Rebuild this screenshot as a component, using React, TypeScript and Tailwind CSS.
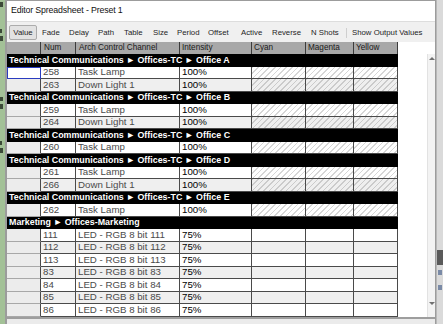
import React from "react";

type Row = { num: string; name: string; value: string };
type Group = { title: string; hatched: boolean; rows: Row[] };

const TC = "Technical Communications \u25BA Offices-TC \u25BA ";

const GROUPS: Group[] = [
  {
    title: TC + "Office A",
    hatched: true,
    rows: [
      { num: "258", name: "Task Lamp", value: "100%" },
      { num: "263", name: "Down Light 1", value: "100%" },
    ],
  },
  {
    title: TC + "Office B",
    hatched: true,
    rows: [
      { num: "259", name: "Task Lamp", value: "100%" },
      { num: "264", name: "Down Light 1", value: "100%" },
    ],
  },
  {
    title: TC + "Office C",
    hatched: true,
    rows: [{ num: "260", name: "Task Lamp", value: "100%" }],
  },
  {
    title: TC + "Office D",
    hatched: true,
    rows: [
      { num: "261", name: "Task Lamp", value: "100%" },
      { num: "266", name: "Down Light 1", value: "100%" },
    ],
  },
  {
    title: TC + "Office E",
    hatched: true,
    rows: [{ num: "262", name: "Task Lamp", value: "100%" }],
  },
  {
    title: "Marketing \u25BA Offices-Marketing",
    hatched: false,
    rows: ["111", "112", "113", "83", "84", "85", "86"].map((n) => ({
      num: n,
      name: "LED - RGB 8 bit " + n,
      value: "75%",
    })),
  },
];

const TABS = [
  { label: "Fade", w: "w-[27px]" },
  { label: "Delay", w: "w-[29px]" },
  { label: "Path", w: "w-[26px]" },
  { label: "Table", w: "w-[29px]" },
  { label: "Size", w: "w-[24px]" },
  { label: "Period", w: "w-[31px]" },
  { label: "Offset", w: "w-[33px]" },
  { label: "Active", w: "w-[31px]" },
  { label: "Reverse", w: "w-[39px]" },
  { label: "N Shots", w: "w-[35px]" },
];

const HATCH_WHITE =
  "bg-[repeating-linear-gradient(135deg,#d6d6d6_0px,#d6d6d6_1px,#ffffff_1px,#ffffff_4px)]";
const HATCH_GRAY =
  "bg-[repeating-linear-gradient(135deg,#cbcbcb_0px,#cbcbcb_1px,#efefef_1px,#efefef_4px)]";

function DataRow({
  row,
  shade,
  hatched,
  selected,
}: {
  row: Row;
  shade: boolean;
  hatched: boolean;
  selected: boolean;
}) {
  const bg = shade ? "bg-[#efefef]" : "bg-white";
  const colour = hatched ? (shade ? HATCH_GRAY : HATCH_WHITE) : bg;
  const cell = "h-full border-r border-b border-[#4a4a4a]";
  return (
    <div className="flex h-[12.5px] text-[9.7px] leading-none">
      <div
        className={`h-full w-[34px] ${
          selected
            ? "border border-[#2a3cc0] bg-white"
            : "border-r border-b border-r-[#4a4a4a] border-b-[#a8a8a8] bg-[#ececec]"
        }`}
      />
      <div className={`${cell} ${bg} flex w-[35px] items-center pl-[2px] text-[#4a4a4a]`}>
        {row.num}
      </div>
      <div className={`${cell} ${bg} flex w-[104px] items-center pl-[2px] text-[#4a4a4a]`}>
        {row.name}
      </div>
      <div className={`${cell} ${bg} flex w-[72px] items-center pl-[2px] text-black`}>
        {row.value}
      </div>
      <div className={`${cell} ${colour} w-[54px]`} />
      <div className={`${cell} ${colour} w-[48px]`} />
      <div className={`${cell} ${colour} w-[44px]`} />
    </div>
  );
}

export default function App() {
  return (
    <div className="flex h-[324px] w-[443px] overflow-hidden bg-[#d8d8d8] font-['Liberation_Sans',Arial,sans-serif]">
      {/* desktop behind, left */}
      <div className="flex w-[5px] flex-col bg-[#a3c197]">
        <div className="mt-[2px] h-[5px] w-[3px] bg-[#3c4a38]" />
        <div className="mt-[22px] h-[4px] w-[2px] bg-[#3c4a38]" />
        <div className="mt-[3px] h-[5px] w-[3px] bg-[#3c4a38]" />
        <div className="mt-[56px] h-[4px] w-[3px] bg-[#3c4a38]" />
        <div className="mt-[3px] h-[5px] w-[3px] bg-[#3c4a38]" />
        <div className="mt-[32px] h-[4px] w-[2px] bg-[#3c4a38]" />
        <div className="mt-[3px] h-[5px] w-[3px] bg-[#3c4a38]" />
      </div>

      {/* window */}
      <div className="flex w-[431px] flex-col border-l-2 border-r border-t border-[#9c9c9c] bg-white">
        <div className="flex h-[20px] shrink-0 items-center pl-[4px] text-[8.8px] tracking-[-0.15px] text-[#111]">
          Editor Spreadsheet - Preset 1
        </div>

        <div className="flex h-[21px] shrink-0 items-start border-t border-[#dddddd] bg-[#f0f0f0] pl-[2px] pt-[3px] text-[7.8px] text-[#1e1e1e]">
          <div className="flex h-[15px] w-[28px] items-center justify-center rounded-[2px] border border-[#acacac] bg-[#e2e2e2]">
            Value
          </div>
          <div className="ml-[5px] flex h-[15px] items-center">
            {TABS.map((t) => (
              <span key={t.label} className={`${t.w} whitespace-nowrap`}>
                {t.label}
              </span>
            ))}
            <span className="h-[10px] w-px bg-[#cfcfcf]" />
            <span className="ml-[5px] whitespace-nowrap">Show Output Values</span>
          </div>
        </div>

        <div className="flex min-h-0 flex-1">
          <div className="flex w-[391px] flex-col">
            <div className="flex h-[12px] bg-[#a8a8a8] text-[8.2px] leading-none text-[#1a1a1a]">
              <div className="h-full w-[34px] border-r border-[#3c3c3c]" />
              <div className="flex h-full w-[35px] items-center border-r border-[#3c3c3c] pl-[3px]">Num</div>
              <div className="flex h-full w-[104px] items-center border-r border-[#3c3c3c] pl-[3px]">
                Arch Control Channel
              </div>
              <div className="flex h-full w-[72px] items-center border-r border-[#3c3c3c] pl-[2px]">Intensity</div>
              <div className="flex h-full w-[54px] items-center border-r border-[#3c3c3c] pl-[2px]">Cyan</div>
              <div className="flex h-full w-[48px] items-center border-r border-[#3c3c3c] pl-[2px]">Magenta</div>
              <div className="flex h-full w-[44px] items-center border-r border-[#3c3c3c] pl-[2px]">Yellow</div>
            </div>

            {GROUPS.map((g, gi) => (
              <React.Fragment key={g.title}>
                <div className="flex h-[12.5px] items-center whitespace-nowrap bg-black pl-[2px] text-[8.9px] font-bold leading-none text-white">
                  {g.title}
                </div>
                {g.rows.map((r, i) => (
                  <DataRow
                    key={r.num}
                    row={r}
                    shade={i % 2 === 1}
                    hatched={g.hatched}
                    selected={gi === 0 && i === 0}
                  />
                ))}
              </React.Fragment>
            ))}
          </div>

          <div className="flex-1" />

          <div className="flex w-[8px] flex-col">
            <div className="h-[12px]" />
            <div className="flex flex-1 flex-col items-center justify-between border-l border-[#e2e2e2] bg-[#f3f3f3] pb-[11px] pt-[2px]">
              <svg width="6" height="4" viewBox="0 0 6 4">
                <path d="M0 4 3 1 6 4Z" fill="#707070" />
              </svg>
              <svg width="6" height="4" viewBox="0 0 6 4">
                <path d="M0 0 3 3 6 0Z" fill="#707070" />
              </svg>
            </div>
          </div>
        </div>

        <div className="h-[7px] shrink-0 border-t-2 border-[#9e9e9e] bg-[#ebebeb]" />
      </div>

      {/* desktop behind, right */}
      <div className="flex w-[7px] flex-col border-l border-[#b8b8b8] bg-[#dadada]">
        <div className="mt-[250px] h-[15px] bg-[#5a5a5a]" />
        <div className="mt-[5px] ml-[1px] h-[5px] w-[4px] bg-[#7a8aa6]" />
        <div className="mt-[10px] ml-[1px] h-[5px] w-[4px] bg-[#7a8aa6]" />
      </div>
    </div>
  );
}
